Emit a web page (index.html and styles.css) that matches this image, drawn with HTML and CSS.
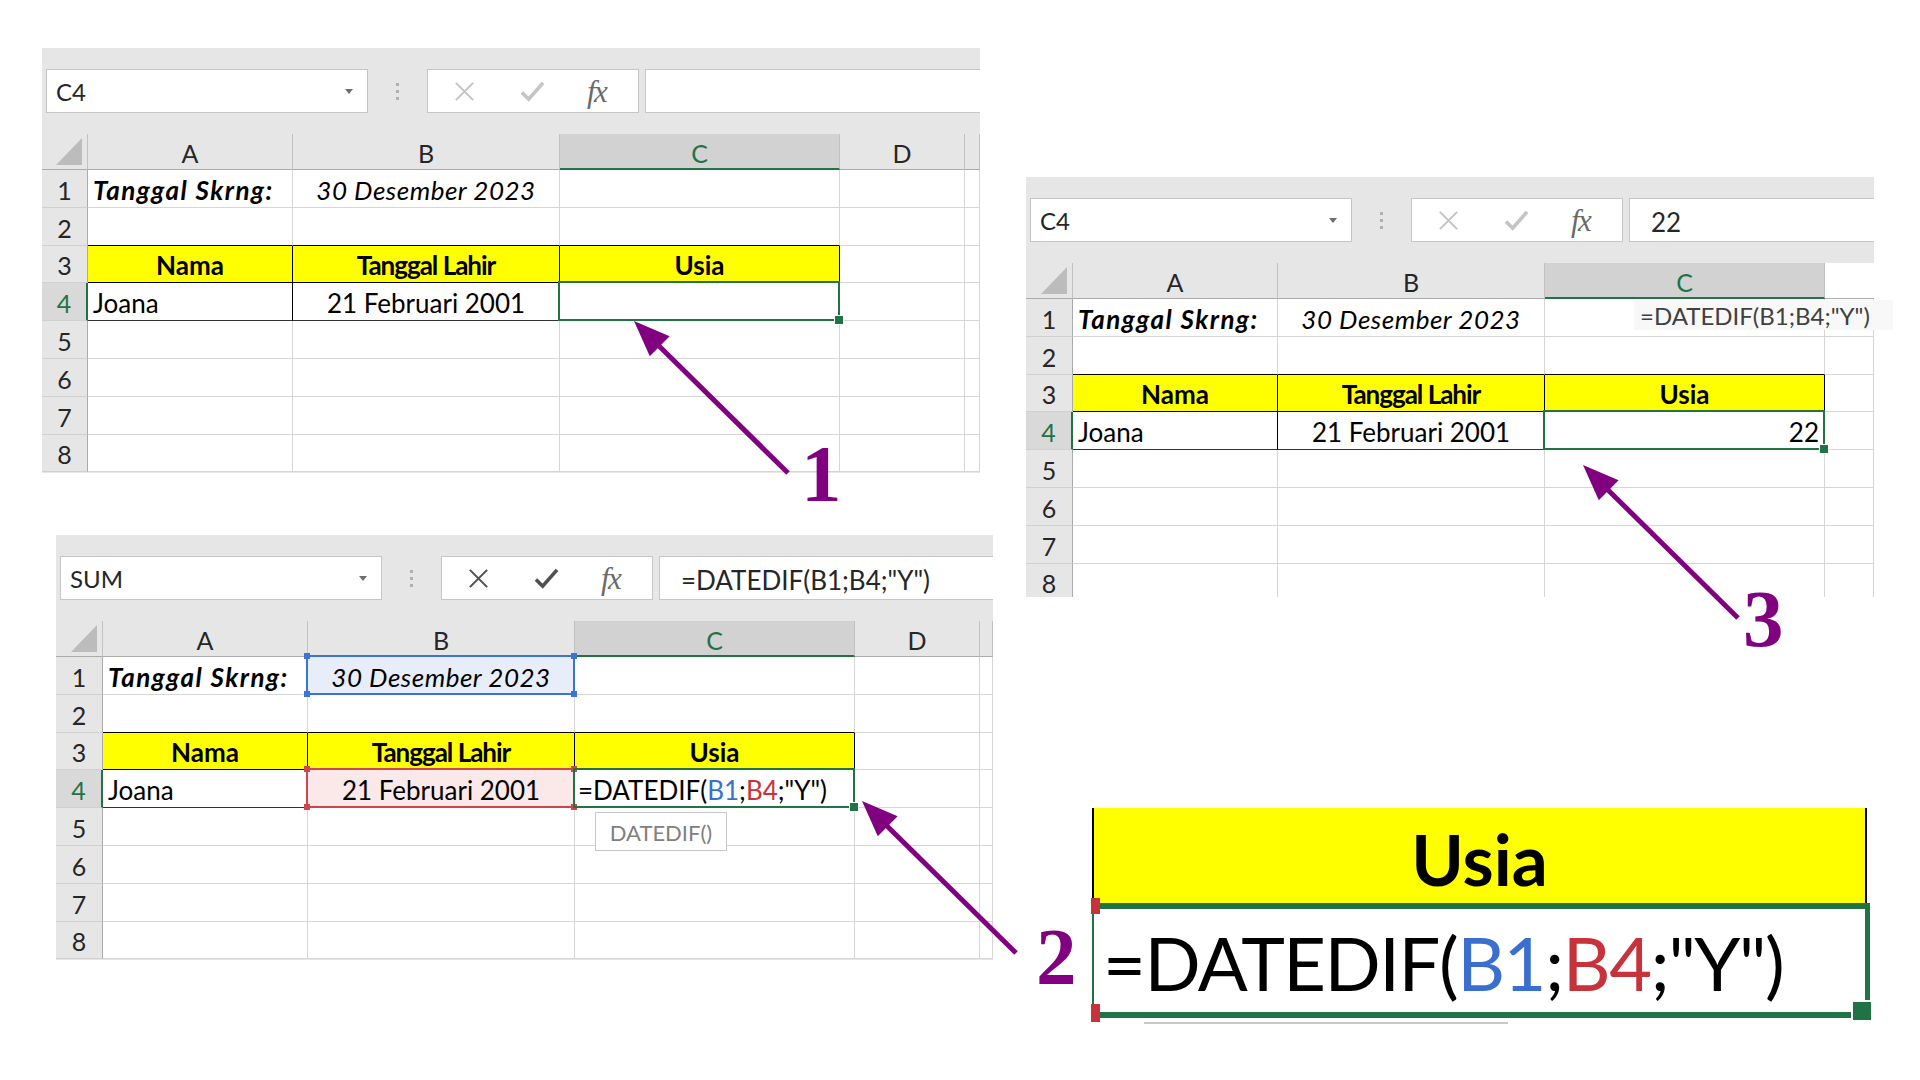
FILE: index.html
```html
<!DOCTYPE html>
<html lang="id">
<head>
<meta charset="utf-8">
<title>DATEDIF Excel</title>
<link rel="stylesheet" href="styles.css">
</head>
<body>
<div class="canvas">

  <!-- Sheet 1 -->
  <section class="sheet s1">
    <div class="fbar">
      <div class="namebox"><span>C4</span><i class="dd"></i></div>
      <div class="grip"><i></i><i></i><i></i></div>
      <div class="icons off">
        <svg class="ix" viewBox="0 0 24 24"><path d="M3 3 L21 21 M21 3 L3 21"/></svg>
        <svg class="ic" viewBox="0 0 26 24"><path d="M2 13 L9 20 L24 3"/></svg>
        <span class="fx">fx</span>
      </div>
      <div class="finput"></div>
    </div>
    <div class="grid g5">
      <div class="c ch corner"></div><div class="c ch">A</div><div class="c ch">B</div><div class="c ch selc">C</div><div class="c ch">D</div><div class="c ch"></div>
      <div class="c rh">1</div><div class="c bi">Tanggal Skrng:</div><div class="c it ctr">30 Desember 2023</div><div class="c"></div><div class="c"></div><div class="c"></div>
      <div class="c rh">2</div><div class="c bb"></div><div class="c bb"></div><div class="c bb"></div><div class="c"></div><div class="c"></div>
      <div class="c rh">3</div><div class="c y">Nama</div><div class="c y tl2">Tanggal Lahir</div><div class="c y">Usia</div><div class="c"></div><div class="c"></div>
      <div class="c rh selr">4</div><div class="c tb">Joana</div><div class="c tb ctr">21 Februari 2001</div><div class="c sel"></div><div class="c"></div><div class="c"></div>
      <div class="c rh">5</div><div class="c"></div><div class="c"></div><div class="c"></div><div class="c"></div><div class="c"></div>
      <div class="c rh">6</div><div class="c"></div><div class="c"></div><div class="c"></div><div class="c"></div><div class="c"></div>
      <div class="c rh">7</div><div class="c"></div><div class="c"></div><div class="c"></div><div class="c"></div><div class="c"></div>
      <div class="c rh">8</div><div class="c"></div><div class="c"></div><div class="c"></div><div class="c"></div><div class="c"></div>
    </div>
  </section>

  <!-- Sheet 2 -->
  <section class="sheet s2">
    <div class="fbar">
      <div class="namebox"><span>SUM</span><i class="dd"></i></div>
      <div class="grip"><i></i><i></i><i></i></div>
      <div class="icons on">
        <svg class="ix" viewBox="0 0 24 24"><path d="M3 3 L21 21 M21 3 L3 21"/></svg>
        <svg class="ic" viewBox="0 0 26 24"><path d="M2 13 L9 20 L24 3"/></svg>
        <span class="fx">fx</span>
      </div>
      <div class="finput big">=DATEDIF(B1;B4;"Y")</div>
    </div>
    <div class="grid g5 w47">
      <div class="c ch corner"></div><div class="c ch">A</div><div class="c ch">B</div><div class="c ch selc">C</div><div class="c ch">D</div><div class="c ch"></div>
      <div class="c rh">1</div><div class="c bi">Tanggal Skrng:</div><div class="c it ctr rng blue"><b class="k tl"></b><b class="k tr"></b><b class="k bl"></b><b class="k br"></b>30 Desember 2023</div><div class="c"></div><div class="c"></div><div class="c"></div>
      <div class="c rh">2</div><div class="c bb"></div><div class="c bb"></div><div class="c bb"></div><div class="c"></div><div class="c"></div>
      <div class="c rh">3</div><div class="c y">Nama</div><div class="c y tl2">Tanggal Lahir</div><div class="c y">Usia</div><div class="c"></div><div class="c"></div>
      <div class="c rh selr">4</div><div class="c tb">Joana</div><div class="c tb ctr rng red"><b class="k tl"></b><b class="k tr"></b><b class="k bl"></b><b class="k br"></b>21 Februari 2001</div><div class="c sel edit">=DATEDIF(<span class="cb">B1</span>;<span class="cr">B4</span>;"Y")<div class="tip">DATEDIF()</div></div><div class="c"></div><div class="c"></div>
      <div class="c rh">5</div><div class="c"></div><div class="c"></div><div class="c"></div><div class="c"></div><div class="c"></div>
      <div class="c rh">6</div><div class="c"></div><div class="c"></div><div class="c"></div><div class="c"></div><div class="c"></div>
      <div class="c rh">7</div><div class="c"></div><div class="c"></div><div class="c"></div><div class="c"></div><div class="c"></div>
      <div class="c rh">8</div><div class="c"></div><div class="c"></div><div class="c"></div><div class="c"></div><div class="c"></div>
    </div>
  </section>

  <!-- Sheet 3 -->
  <section class="sheet s3">
    <div class="fbar">
      <div class="namebox"><span>C4</span><i class="dd"></i></div>
      <div class="grip"><i></i><i></i><i></i></div>
      <div class="icons off">
        <svg class="ix" viewBox="0 0 24 24"><path d="M3 3 L21 21 M21 3 L3 21"/></svg>
        <svg class="ic" viewBox="0 0 26 24"><path d="M2 13 L9 20 L24 3"/></svg>
        <span class="fx">fx</span>
      </div>
      <div class="finput big">22</div>
    </div>
    <div class="grid g4 w47">
      <div class="c ch corner"></div><div class="c ch">A</div><div class="c ch">B</div><div class="c ch selc">C</div><div class="c chx"></div>
      <div class="c rh">1</div><div class="c bi">Tanggal Skrng:</div><div class="c it ctr">30 Desember 2023</div><div class="c"></div><div class="c"></div>
      <div class="c rh">2</div><div class="c bb"></div><div class="c bb"></div><div class="c bb"></div><div class="c"></div>
      <div class="c rh">3</div><div class="c y">Nama</div><div class="c y tl2">Tanggal Lahir</div><div class="c y">Usia</div><div class="c"></div>
      <div class="c rh selr">4</div><div class="c tb">Joana</div><div class="c tb ctr">21 Februari 2001</div><div class="c sel rt">22</div><div class="c"></div>
      <div class="c rh">5</div><div class="c"></div><div class="c"></div><div class="c"></div><div class="c"></div>
      <div class="c rh">6</div><div class="c"></div><div class="c"></div><div class="c"></div><div class="c"></div>
      <div class="c rh">7</div><div class="c"></div><div class="c"></div><div class="c"></div><div class="c"></div>
      <div class="c rh">8</div><div class="c"></div><div class="c"></div><div class="c"></div><div class="c"></div>
    </div>
  </section>
  <div class="ftip">=DATEDIF(B1;B4;"Y")</div>

  <!-- Zoomed cell -->
  <div class="zoom">
    <div class="zy">Usia</div>
    <div class="zc">=DATEDIF(<span class="cb">B1</span>;<span class="cr">B4</span>;"Y")
      <b class="zr zr1"></b><b class="zr zr2"></b><b class="zh"></b>
    </div>
    <div class="zline"></div>
  </div>

  <!-- Arrows -->
  <svg class="arrows" viewBox="0 0 1920 1080">
    <g stroke="#800080" stroke-width="5" fill="none">
      <line x1="788" y1="473" x2="658" y2="345"/>
      <line x1="1016" y1="953" x2="886" y2="825"/>
      <line x1="1738" y1="618" x2="1607" y2="489"/>
    </g>
    <g fill="#800080">
      <polygon points="634,321 669.6,336.3 649.8,356.3"/>
      <polygon points="862,801 897.6,816.3 877.8,836.3"/>
      <polygon points="1583,465 1618.6,480.3 1598.8,500.3"/>
    </g>
  </svg>
  <div class="num n1">1</div>
  <div class="num n2">2</div>
  <div class="num n3">3</div>
</div>
</body>
</html>
```

FILE: styles.css
```css
* { box-sizing: border-box; }
body { margin: 0; background: #fff; font-family: Lato, "Noto Sans", sans-serif; color: #000; }
.canvas { position: relative; width: 1920px; height: 1080px; overflow: hidden; background: #fff; }

.sheet { position: absolute; background: #e6e6e6; display: flex; flex-direction: column; overflow: hidden; }
.s1 { left: 42px; top: 48px; width: 938px; height: 425px; }
.s2 { left: 56px; top: 535px; width: 937px; height: 425px; }
.s3 { left: 1026px; top: 177px; width: 848px; height: 420px; }

.fbar { display: flex; align-items: center; height: 44px; margin: 21px 0 21px 4px; flex: none; }
.namebox { width: 322px; height: 100%; background: #fff; border: 1px solid #c6c6c6; display: flex; align-items: center; justify-content: space-between; padding: 0 14px 0 9px; font-size: 24px; color: #262626; }
.dd { width: 0; height: 0; border-left: 4px solid transparent; border-right: 4px solid transparent; border-top: 5px solid #6e6e6e; }
.grip { width: 59px; display: flex; flex-direction: column; align-items: center; gap: 4px; }
.grip i { width: 3px; height: 3px; background: #b0b0b0; }
.icons { width: 212px; height: 100%; background: #fff; border: 1px solid #c6c6c6; display: flex; align-items: center; padding-left: 25px; gap: 44px; }
.icons svg { fill: none; stroke-linecap: butt; }
.ix { width: 23px; height: 23px; stroke-width: 2.2; }
.ic { width: 25px; height: 23px; stroke-width: 3.8; }
.off svg { stroke: #c4c4c4; }
.on svg { stroke: #505050; }
.fx { font-family: "Liberation Serif", serif; font-style: italic; font-size: 31px; line-height: 1; color: #6a6a6a; letter-spacing: -1.5px; margin-left: -2px; }
.finput { flex: 1; height: 100%; margin-left: 6px; background: #fff; border: 1px solid #c6c6c6; border-right: none; padding: 3px 0 0 21px; display: flex; align-items: center; font-size: 24px; color: #262626; white-space: nowrap; }
.finput.big { font-size: 26px; }

.grid { display: grid; grid-template-rows: 36px repeat(8, 37.8px); background: #fff; flex: none; }
.g5 { grid-template-columns: 46px 205px 267px 280px 125px 1fr; }
.g5.w47 { grid-template-columns: 47px 205px 267px 280px 125px 1fr; }
.g4.w47 { grid-template-columns: 47px 205px 267px 280px 1fr; }

.c { position: relative; display: flex; align-items: center; padding: 3px 5px 0; border-right: 1px solid #d6d6d6; border-bottom: 1px solid #d6d6d6; font-size: 26px; white-space: nowrap; }
.ch { background: #e6e6e6; justify-content: center; border-right-color: #c2c2c2; border-bottom-color: #ababab; color: #262626; font-size: 25px; }
.chx { border-right: none; border-bottom-color: #ababab; }
.rh { background: #e6e6e6; justify-content: center; border-right-color: #ababab; border-bottom-color: #d0d0d0; color: #262626; padding: 3px 0 0; font-size: 25px; }
.selc { background: #d2d2d2; color: #217346; border-bottom: 2px solid #217346; }
.selr { background: #d9d9d9; color: #217346; border-right: 2px solid #217346; }
.corner::after { content: ""; position: absolute; right: 5px; bottom: 4px; width: 26px; height: 27px; background: #bcbcbc; clip-path: polygon(100% 0, 100% 100%, 0 100%); }

.bi { font-weight: 700; font-style: italic; letter-spacing: 1.5px; }
.it { font-style: italic; letter-spacing: 0.5px; }
.ctr { justify-content: center; }
.rt { justify-content: flex-end; }
.bb { border-bottom-color: #000; }
.y { background: #ffff00; font-weight: 700; justify-content: center; border-right-color: #000; border-bottom-color: #000; }
.tl2 { letter-spacing: -1px; }
.tb { border-right-color: #000; border-bottom-color: #333; }

.sel { z-index: 2; }
.sel::after { content: ""; position: absolute; left: -2px; top: -2px; right: -1px; bottom: -1px; border: 2px solid #217346; }
.sel::before { content: ""; position: absolute; right: -5px; bottom: -5px; width: 8px; height: 8px; background: #217346; border: 1px solid #fff; z-index: 3; }
.edit { padding-left: 3px; overflow: visible; }
.cb { color: #3a6fcf; }
.cr { color: #c7333b; }
.tip { position: absolute; left: 20px; top: 42px; width: 132px; height: 39px; background: #fff; border: 1px solid #c8c8c8; display: flex; align-items: center; justify-content: center; padding-top: 2px; font-size: 22px; color: #808080; }

.rng { z-index: 1; }
.rng::after { content: ""; position: absolute; left: -2px; top: -2px; right: -1px; bottom: -1px; border: 2px solid; }
.blue { background: #e8eef9; }
.blue::after { border-color: #3c73d6; }
.red { background: #fbe9e9; }
.red::after { border-color: #d0464c; }
.k { position: absolute; width: 6px; height: 6px; z-index: 2; }
.blue .k { background: #3c73d6; }
.red .k { background: #d0464c; }
.k.tl { left: -4px; top: -4px; }
.k.tr { right: -3px; top: -4px; }
.k.bl { left: -4px; bottom: -3px; }
.k.br { right: -3px; bottom: -3px; }

.ftip { position: absolute; left: 1634px; top: 300px; width: 259px; height: 30px; background: #f8f8f8; display: flex; align-items: center; padding-left: 6px; font-size: 24px; color: #404040; white-space: nowrap; }

.zoom { position: absolute; left: 1092px; top: 808px; width: 790px; height: 230px; }
.zy { width: 775px; height: 97px; background: #ffff00; border-left: 2px solid #000; border-right: 2px solid #000; display: flex; justify-content: center; align-items: center; padding-top: 4px; font-weight: 700; font-size: 71px; }
.zc { position: relative; width: 778px; height: 115px; margin-top: -2px; border-top: 6px solid #217346; border-bottom: 6px solid #217346; border-right: 5px solid #217346; border-left: 2px solid #217346; display: flex; align-items: center; padding: 4px 0 0 9px; font-size: 74px; letter-spacing: -1.5px; white-space: nowrap; }
.zr { position: absolute; left: -3px; width: 9px; background: #c7333b; }
.zr1 { top: -11px; height: 16px; }
.zr2 { bottom: -10px; height: 18px; }
.zh { position: absolute; right: -8px; bottom: -10px; width: 22px; height: 22px; background: #217346; border: 2px solid #fff; }
.zline { margin: 4px 0 0 52px; width: 364px; height: 2px; background: #c8c8c8; }

.arrows { position: absolute; left: 0; top: 0; width: 1920px; height: 1080px; pointer-events: none; }
.num { position: absolute; font-family: "Liberation Serif", serif; font-weight: 700; font-size: 81px; line-height: 1; color: #800080; }
.n1 { left: 801px; top: 434px; }
.n2 { left: 1036px; top: 917px; }
.n3 { left: 1743px; top: 579px; }
```
